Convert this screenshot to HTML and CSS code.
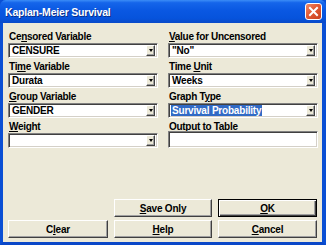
FILE: index.html
```html
<!DOCTYPE html>
<html>
<head>
<meta charset="utf-8">
<link rel="stylesheet" href="styles.css">
</head>
<body>
<div class="window">
  <div class="titlebar">
    <span class="title">Kaplan-Meier Survival</span>
    <span class="close"><svg width="11" height="11" viewBox="0 0 11 11"><path d="M2 2 L9 9 M9 2 L2 9" stroke="#fff" stroke-width="2" stroke-linecap="square"/></svg></span>
  </div>
  <div class="body">
    <div class="fields">
      <div class="field">
        <div class="label">Ce<u>n</u>sored Variable</div>
        <div class="combo"><span class="val">CENSURE</span><span class="drop"><i></i></span></div>
      </div>
      <div class="field">
        <div class="label"><u>V</u>alue for Uncensored</div>
        <div class="combo"><span class="val">"No"</span><span class="drop"><i></i></span></div>
      </div>
      <div class="field">
        <div class="label">Ti<u>m</u>e Variable</div>
        <div class="combo"><span class="val">Durata</span><span class="drop"><i></i></span></div>
      </div>
      <div class="field">
        <div class="label">Time <u>U</u>nit</div>
        <div class="combo"><span class="val">Weeks</span><span class="drop"><i></i></span></div>
      </div>
      <div class="field">
        <div class="label"><u>G</u>roup Variable</div>
        <div class="combo"><span class="val">GENDER</span><span class="drop"><i></i></span></div>
      </div>
      <div class="field">
        <div class="label">Graph T<u>y</u>pe</div>
        <div class="combo"><span class="val"><span class="sel">Survival Probability</span></span><span class="drop"><i></i></span></div>
      </div>
      <div class="field">
        <div class="label"><u>W</u>eight</div>
        <div class="combo"><span class="val"></span><span class="drop"><i></i></span></div>
      </div>
      <div class="field">
        <div class="label">O<u>u</u>tput to Table</div>
        <div class="textbox"></div>
      </div>
    </div>
    <div class="buttons">
      <div class="spacer"></div>
      <div class="btn"><u>S</u>ave Only</div>
      <div class="btn default"><u>O</u>K</div>
      <div class="btn">C<u>l</u>ear</div>
      <div class="btn"><u>H</u>elp</div>
      <div class="btn"><u>C</u>ancel</div>
    </div>
  </div>
</div>
</body>
</html>
```

FILE: styles.css
```css
html, body {
  margin: 0;
  padding: 0;
  background: #0a52d8;
}
body {
  width: 326px;
  height: 245px;
  overflow: hidden;
  font-family: "Liberation Sans", Arial, sans-serif;
  font-weight: bold;
  font-size: 10px;
  color: #000;
}
.window {
  width: 326px;
  height: 245px;
  box-sizing: border-box;
  display: flex;
  flex-direction: column;
  background: #0d5ae0;
  border-left: 3px solid #0a4fd4;
  border-right: 4px solid #0a4fd4;
  border-bottom: 3px solid #0a47c8;
}
.titlebar {
  height: 23px;
  flex: none;
  margin: 0 -4px 0 -3px;
  padding: 0 4px 0 5px;
  display: flex;
  align-items: center;
  justify-content: space-between;
  background: linear-gradient(#3b8df7 0%, #1565ea 12%, #0a58e2 45%, #0653dc 80%, #0a4ac8 100%);
  border-radius: 6px 6px 0 0;
}
.title {
  color: #fff;
  font-size: 10.5px;
  font-weight: bold;
  letter-spacing: -0.2px;
  text-shadow: 1px 1px 0 #0a2f8a;
}
.close {
  width: 17px;
  height: 17px;
  box-sizing: border-box;
  border: 1px solid #fff;
  border-radius: 3px;
  background: linear-gradient(135deg, #f08a6a 0%, #e25a34 45%, #c8401e 100%);
  display: flex;
  align-items: center;
  justify-content: center;
}
.close svg { display: block; }
.body {
  flex: 1;
  background: #ece9d8;
  padding: 8px 6px 0 5px;
}
.fields {
  display: grid;
  grid-template-columns: 150px 150px;
  column-gap: 10px;
  row-gap: 3px;
}
.field {
  display: flex;
  flex-direction: column;
}
.label {
  height: 11px;
  line-height: 11px;
  margin-bottom: 1px;
  padding-left: 1px;
  letter-spacing: -0.3px;
  white-space: nowrap;
}
.combo, .textbox {
  height: 15px;
  box-sizing: border-box;
  background: #fff;
  border-top: 1px solid #808080;
  border-left: 1px solid #808080;
  border-right: 1px solid #fff;
  border-bottom: 1px solid #fff;
  box-shadow: inset 1px 1px 0 #404040, inset -1px -1px 0 #d4d0c8;
  display: flex;
  align-items: center;
  padding: 2px 2px 2px 3px;
}
.textbox {
  height: 17px;
  margin-top: -2px;
}
.val {
  flex: 1;
  line-height: 11px;
  letter-spacing: -0.2px;
  white-space: nowrap;
}
.sel {
  background: #316ac5;
  color: #fff;
  padding: 0 1px;
  margin-left: -1px;
}
.drop {
  width: 9px;
  height: 11px;
  box-sizing: border-box;
  background: #ece9d8;
  border-top: 1px solid #fff;
  border-left: 1px solid #fff;
  border-right: 1px solid #404040;
  border-bottom: 1px solid #404040;
  box-shadow: inset -1px -1px 0 #a0a0a0;
  display: flex;
  align-items: center;
  justify-content: center;
}
.drop i {
  width: 0;
  height: 0;
  border-left: 2.5px solid transparent;
  border-right: 2.5px solid transparent;
  border-top: 3px solid #000;
}
.buttons {
  margin-top: 51px;
  display: grid;
  grid-template-columns: 100px 98px 99px;
  column-gap: 6px;
  row-gap: 3px;
}
.btn {
  height: 18px;
  box-sizing: border-box;
  background: #ece9d8;
  border-top: 1px solid #fff;
  border-left: 1px solid #fff;
  border-right: 1px solid #404040;
  border-bottom: 1px solid #404040;
  box-shadow: inset -1px -1px 0 #a0a0a0;
  display: flex;
  align-items: center;
  justify-content: center;
  letter-spacing: -0.2px;
}
.btn.default {
  border: 1px solid #000;
  box-shadow: inset 1px 1px 0 #fff, inset -1px -1px 0 #404040, inset -2px -2px 0 #a0a0a0;
}
```
